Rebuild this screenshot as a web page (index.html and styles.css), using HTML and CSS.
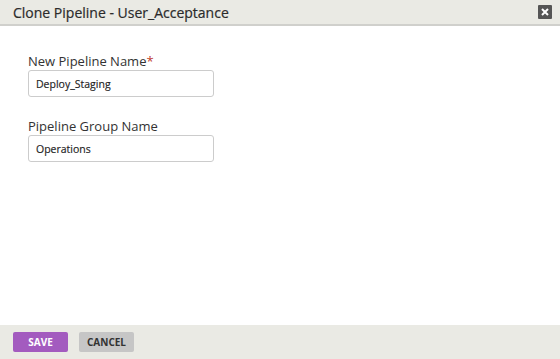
FILE: index.html
```html
<!DOCTYPE html>
<html>
    <head>
        <meta charset="utf-8" />
        <title>Clone Pipeline</title>
        <link rel="stylesheet" href="styles.css">
    </head>
    <body>
    <div class="modal">
        <div class="modal-header">
            <h3 class="modal-title">Clone Pipeline - User_Acceptance</h3>
            <button class="modal-close" type="button" aria-label="Close">
                <svg width="8" height="8" viewBox="0 0 8 8"><path d="M1 1 L7 7 M7 1 L1 7" stroke="#fff" stroke-width="2" /></svg>
            </button>
        </div>
        <div class="modal-body">
            <div class="form-group">
                <label class="form-label">New Pipeline Name<span class="required">*</span></label>
                <input class="form-input" type="text" value="Deploy_Staging">
            </div>
            <div class="form-group">
                <label class="form-label">Pipeline Group Name</label>
                <input class="form-input" type="text" value="Operations">
            </div>
        </div>
        <div class="modal-footer">
            <button class="btn btn-primary" type="button">Save</button>
            <button class="btn btn-secondary" type="button">Cancel</button>
        </div>
    </div>
    </body>
</html>
```

FILE: styles.css
```css
html, body {
	margin: 0;
	height: 100%;
}
body {
	font-family: "Open Sans", "DejaVu Sans", sans-serif;
	color: #333;
	background: #fff;
}
.modal {
	display: flex;
	flex-direction: column;
	height: 359px;
}
.modal-header {
	display: flex;
	align-items: center;
	justify-content: space-between;
	height: 24px;
	padding: 0 8px 0 13px;
	background-color: #eaeae4;
	border-bottom: 2px solid #d0d0cc;
}
.modal-title {
	margin: 0;
	font-size: 14px;
	font-weight: 400;
	color: #2b2b2b;
	-webkit-text-stroke: 0.2px #2b2b2b;
}
.modal-close {
	display: flex;
	align-items: center;
	justify-content: center;
	width: 14px;
	height: 14px;
	padding: 0;
	border: 0;
	border-radius: 1px;
	background-color: #555;
}
.modal-body {
	flex: 1;
	padding: 27px 28px 0;
}
.form-group {
	display: flex;
	flex-direction: column;
	align-items: flex-start;
	margin-bottom: 21px;
}
.form-label {
	font-size: 13px;
	line-height: 16px;
	margin-bottom: 1px;
	color: #333;
}
.required {
	color: #c0392b;
}
.form-input {
	box-sizing: border-box;
	width: 186px;
	height: 27px;
	padding: 0 7px;
	border: 1px solid #ccc;
	border-radius: 3px;
	font-family: inherit;
	font-size: 10.5px;
	color: #222;
	-webkit-text-stroke: 0.15px #222;
}
.modal-footer {
	display: flex;
	gap: 11px;
	height: 34px;
	box-sizing: border-box;
	padding: 7px 13px;
	background-color: #eaeae4;
}
.btn {
	width: 55px;
	height: 20px;
	padding: 0;
	border: 0;
	border-radius: 2px;
	font-family: inherit;
	font-size: 10px;
	font-weight: 700;
	text-transform: uppercase;
}
.btn-primary {
	background-color: #a35bbf;
	color: #fff;
}
.btn-secondary {
	background-color: #c6c6c6;
	color: #333;
}
```
